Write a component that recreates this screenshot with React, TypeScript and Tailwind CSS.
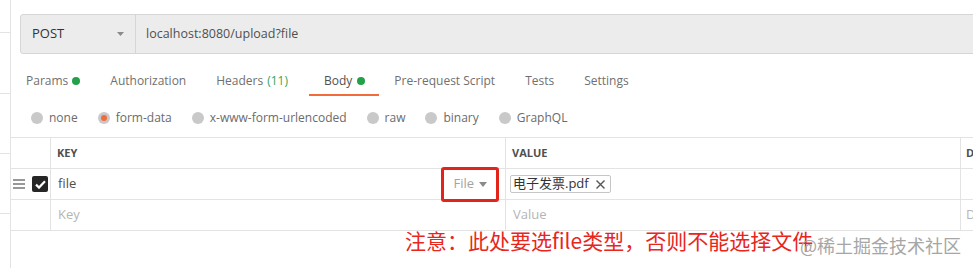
import React from 'react'

const tabs = [
    { label: 'Params', dot: true, cls: 'gap-[4px] px-[15px]' },
    { label: 'Authorization', cls: 'gap-[6px] px-[15px]' },
    { label: 'Headers', count: '(11)', cls: 'gap-[5px] pl-[15px] pr-[21px]' },
    { label: 'Body', dot: true, active: true, cls: 'gap-[5px] pl-[15px] pr-[14px]' },
    { label: 'Pre-request Script', cls: 'gap-[6px] px-[15px]' },
    { label: 'Tests', cls: 'gap-[6px] px-[15px]' },
    { label: 'Settings', cls: 'gap-[6px] px-[15px]' },
]

const bodyTypes = ['none', 'form-data', 'x-www-form-urlencoded', 'raw', 'binary', 'GraphQL']

function Radio({ label, checked }: { label: string; checked?: boolean }) {
    return (
        <div className="flex items-center gap-[6px]">
            <span className="w-[12px] h-[12px] rounded-full bg-[#c9c9c9] flex items-center justify-center">
                {checked && <span className="w-[6px] h-[6px] rounded-full bg-[#f26b3a]" />}
            </span>
            <span className="text-[12px] text-[#6b6b6b]">{label}</span>
        </div>
    )
}

export default function App() {
    return (
        <div className="relative w-[973px] h-[268px] overflow-hidden bg-white flex font-['Open_Sans','Noto_Sans_CJK_SC',sans-serif]">
            {/* sidebar edge */}
            <div className="w-[11px] shrink-0 border-r border-[#e3e3e3] flex flex-col">
                <div className="h-[33px] border-b border-[#e3e3e3]" />
                <div className="h-[61px] border-b border-[#e3e3e3]" />
                <div className="h-[60px] border-b border-[#e3e3e3]" />
                <div className="h-[60px] border-b border-[#e3e3e3]" />
            </div>

            <div className="flex-1 flex flex-col">
                {/* url bar */}
                <div className="mt-[14px] ml-[9px] h-[40px] flex border border-[#d6d6d6] bg-[#ececec] rounded-l-[3px]">
                    <div className="w-[115px] border-r border-[#d6d6d6] flex items-center justify-between pl-[11px] pr-[11px]">
                        <span className="text-[13px] text-[#333]">POST</span>
                        <svg width="7" height="4" viewBox="0 0 7 4">
                            <path d="M0 0h7L3.5 4z" fill="#8a8a8a" />
                        </svg>
                    </div>
                    <div className="flex items-center pl-[10px] text-[12.5px] text-[#505050]">localhost:8080/upload?file</div>
                </div>

                {/* tabs */}
                <div className="mt-[12px] h-[30px] flex">
                    {tabs.map((t) => (
                        <div
                            key={t.label}
                            className={`flex items-center pt-[2px] h-full border-b-2 text-[12px] ${t.cls} ${
                                t.active ? 'border-[#f26b3a] text-[#505050]' : 'border-transparent text-[#707070]'
                            }`}
                        >
                            <span>{t.label}</span>
                            {t.count && <span className="text-[#3aa35a] -ml-[1px]">{t.count}</span>}
                            {t.dot && <span className="w-[8px] h-[8px] rounded-full bg-[#22a14a]" />}
                        </div>
                    ))}
                </div>

                {/* body types */}
                <div className="mt-[13px] h-[18px] pl-[20px] flex items-center gap-[20px]">
                    {bodyTypes.map((b) => (
                        <Radio key={b} label={b} checked={b === 'form-data'} />
                    ))}
                </div>

                {/* table */}
                <div className="mt-[10px] border-t border-[#e3e3e3] grid grid-cols-[40px_455px_455px_1fr] text-[13px]">
                    {/* header */}
                    <div className="h-[31px] border-r border-b border-[#e3e3e3]" />
                    <div className="h-[31px] border-r border-b border-[#e3e3e3] flex items-center pl-[6px] text-[11px] font-bold text-[#505050]">KEY</div>
                    <div className="h-[31px] border-r border-b border-[#e3e3e3] flex items-center pl-[6px] text-[11px] font-bold text-[#505050]">VALUE</div>
                    <div className="h-[31px] border-b border-[#e3e3e3] flex items-center pl-[5px] text-[11px] font-bold text-[#505050]">D</div>

                    {/* row 1 */}
                    <div className="h-[31px] border-r border-b border-[#e3e3e3] flex items-center pl-[2px] gap-[7px]">
                        <svg width="12" height="10" viewBox="0 0 12 10">
                            <path d="M0 1h12M0 5h12M0 9h12" stroke="#777" strokeWidth="1.3" />
                        </svg>
                        <span className="w-[16px] h-[16px] rounded-[2px] bg-[#262626] flex items-center justify-center">
                            <svg width="11" height="9" viewBox="0 0 11 9">
                                <path d="M1 4.6l3 3L10 1.3" stroke="#fff" strokeWidth="2.2" fill="none" />
                            </svg>
                        </span>
                    </div>
                    <div className="h-[31px] border-r border-b border-[#e3e3e3] flex items-center justify-between pl-[7px] pr-[18px]">
                        <span className="text-[#505050]">file</span>
                        <span className="flex items-center gap-[5px] text-[#a3a3a3]">
                            File
                            <svg width="8" height="5" viewBox="0 0 8 5">
                                <path d="M0 0h8L4 5z" fill="#8a8a8a" />
                            </svg>
                        </span>
                    </div>
                    <div className="h-[31px] border-r border-b border-[#e3e3e3] flex items-center pl-[4px]">
                        <span className="h-[18px] flex items-center gap-[7px] pl-[2px] pr-[5px] border border-[#c6c6c6] rounded-[2px] text-[#333]">
                            电子发票.pdf
                            <svg width="9" height="9" viewBox="0 0 9 9">
                                <path d="M0.5 0.5l8 8M8.5 0.5l-8 8" stroke="#555" strokeWidth="1.4" />
                            </svg>
                        </span>
                    </div>
                    <div className="h-[31px] border-b border-[#e3e3e3]" />

                    {/* row 2 */}
                    <div className="h-[31px] border-r border-b border-[#e3e3e3]" />
                    <div className="h-[31px] border-r border-b border-[#e3e3e3] flex items-center pl-[7px] text-[#b5b5b5]">Key</div>
                    <div className="h-[31px] border-r border-b border-[#e3e3e3] flex items-center pl-[7px] text-[#b5b5b5]">Value</div>
                    <div className="h-[31px] border-b border-[#e3e3e3] flex items-center pl-[5px] text-[#b5b5b5]">D</div>
                </div>
            </div>

            {/* annotation */}
            <div className="absolute left-[441px] top-[167px] w-[58px] h-[35px] border-[3px] border-[#e3241b] rounded-[3px]" />
            <div className="absolute left-[405px] top-[227px] text-[21px] leading-[26px] text-[#e8261c] font-['Noto_Sans_CJK_SC',sans-serif]">
                注意：此处要选file类型，否则不能选择文件
            </div>
            <div className="absolute left-[800px] top-[233px] text-[18px] leading-[24px] text-[#a6a6a6] font-['Noto_Sans_CJK_SC',sans-serif]">
                @稀土掘金技术社区
            </div>
        </div>
    )
}
